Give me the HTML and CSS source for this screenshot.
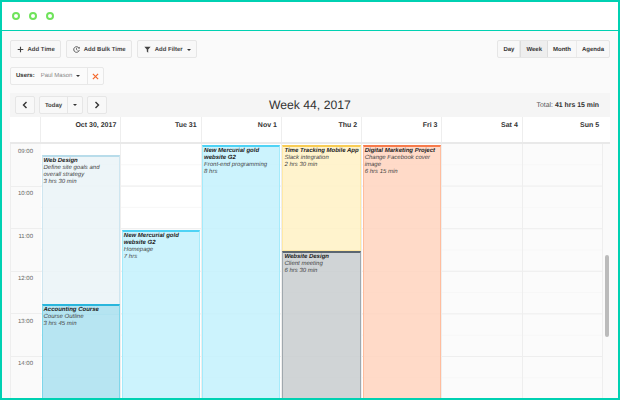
FILE: index.html
```html
<!DOCTYPE html>
<html>
<head>
    <link rel="stylesheet" href="styles.css">
</head>
<body>
    <div class="window">
        <div class="titlebar">
            <span class="dot"></span>
            <span class="dot"></span>
            <span class="dot"></span>
        </div>
        <div class="content">
            <div class="actions">
                <button class="btn">
                    <svg class="icon" viewBox="0 0 10 10"><path d="M5 1v8M1 5h8" stroke="#444" stroke-width="1.6" fill="none"/></svg>
                    Add Time
                </button>
                <button class="btn">
                    <svg class="icon" viewBox="0 0 10 10"><path d="M8.6 3.2A4 4 0 1 0 9 5.6" stroke="#444" stroke-width="1.2" fill="none"/><path d="M7.2 3.4h2.4V1z" fill="#444"/><path d="M5 2.8v2.4l1.6 1" stroke="#444" stroke-width="1" fill="none"/></svg>
                    Add Bulk Time
                </button>
                <button class="btn">
                    <svg class="icon" viewBox="0 0 10 10"><path d="M.5 1h9L6 5v4.500L4 8V5z" fill="#444"/></svg>
                    Add Filter
                    <span class="caret"></span>
                </button>
                <div class="views">
                    <button class="view">Day</button>
                    <button class="view active">Week</button>
                    <button class="view">Month</button>
                    <button class="view">Agenda</button>
                </div>
            </div>

            <div class="filter">
                <div class="filter-users">
                    <b>Users:</b>
                    <span class="filter-value">Paul Mason</span>
                    <span class="caret"></span>
                </div>
                <div class="filter-clear">
                    <svg viewBox="0 0 8 8"><path d="M1 1l6 6M7 1L1 7" stroke="#f4682c" stroke-width="1.400" fill="none"/></svg>
                </div>
            </div>

            <div class="calendar">
                <div class="cal-toolbar">
                    <div class="cal-nav">
                        <button class="btn nav-btn"><svg viewBox="0 0 6 8"><path d="M4.500 1L1.500 4l3 3" stroke="#333" stroke-width="1.400" fill="none"/></svg></button>
                        <div class="today-group">
                            <button class="today">Today</button>
                            <button class="today-more"><span class="caret"></span></button>
                        </div>
                        <button class="btn nav-btn"><svg viewBox="0 0 6 8"><path d="M1.500 1l3 3-3 3" stroke="#333" stroke-width="1.400" fill="none"/></svg></button>
                    </div>
                    <div class="cal-title">Week 44, 2017</div>
                    <div class="cal-total">Total: <b>41 hrs 15 min</b></div>
                </div>

                <div class="cal-head">
                    <div class="head-gutter"></div>
                    <div class="head-day">Oct 30, 2017</div>
                    <div class="head-day">Tue 31</div>
                    <div class="head-day">Nov 1</div>
                    <div class="head-day">Thu 2</div>
                    <div class="head-day">Fri 3</div>
                    <div class="head-day">Sat 4</div>
                    <div class="head-day">Sun 5</div>
                </div>

                <div class="cal-body">
                    <div class="times">
                        <div class="time">09:00</div>
                        <div class="time">10:00</div>
                        <div class="time">11:00</div>
                        <div class="time">12:00</div>
                        <div class="time">13:00</div>
                        <div class="time">14:00</div>
                    </div>
                    <div class="day">
                        <div class="event ev-plain ev-webdesign">
                            <b>Web Design</b>
                            <span>Define site goals and overall strategy</span>
                            <span>3 hrs 30 min</span>
                        </div>
                        <div class="event ev-teal ev-accounting">
                            <b>Accounting Course</b>
                            <span>Course Outline</span>
                            <span>3 hrs 45 min</span>
                        </div>
                    </div>
                    <div class="day">
                        <div class="event ev-blue ev-homepage">
                            <b>New Mercurial gold website G2</b>
                            <span>Homepage</span>
                            <span>7 hrs</span>
                        </div>
                    </div>
                    <div class="day">
                        <div class="event ev-blue ev-frontend">
                            <b>New Mercurial gold website G2</b>
                            <span>Front-end programming</span>
                            <span>8 hrs</span>
                        </div>
                    </div>
                    <div class="day">
                        <div class="event ev-yellow ev-tracking">
                            <b>Time Tracking Mobile App</b>
                            <span>Slack integration</span>
                            <span>2 hrs 30 min</span>
                        </div>
                        <div class="event ev-grey ev-website">
                            <b>Website Design</b>
                            <span>Client meeting</span>
                            <span>6 hrs 30 min</span>
                        </div>
                    </div>
                    <div class="day">
                        <div class="event ev-orange ev-marketing">
                            <b>Digital Marketing Project</b>
                            <span>Change Facebook cover image</span>
                            <span>6 hrs 15 min</span>
                        </div>
                    </div>
                    <div class="day weekend"></div>
                    <div class="day weekend"></div>
                    <div class="scroll-track"><div class="scroll-thumb"></div></div>
                </div>
            </div>
        </div>
    </div>
</body>
</html>
```

FILE: styles.css
```css
* {
    box-sizing: border-box;
}

body {
    margin: 0;
    font-family: "Liberation Sans", Arial, sans-serif;
    color: #333;
    text-rendering: geometricPrecision;
}

button {
    font-family: inherit;
    text-rendering: geometricPrecision;
}

.window {
    width: 620px;
    height: 400px;
    border: 2px solid #00d1b2;
    overflow: hidden;
    background: #fafafa;
}

.titlebar {
    display: flex;
    align-items: center;
    gap: 9px;
    height: 29px;
    padding-left: 10px;
    background: #fff;
    border-bottom: 1px solid #00d1b2;
}

.dot {
    width: 8px;
    height: 8px;
    border: 2.500px solid #6fe35b;
    border-radius: 50%;
}

.content {
    padding: 9px 8px 0 8px;
}

.actions {
    display: flex;
    gap: 5px;
    height: 18px;
}

.btn {
    display: flex;
    align-items: center;
    gap: 4px;
    height: 18px;
    padding: 1px 5.500px 0;
    background: #f8f8f8;
    border: 1px solid #e6e6e6;
    border-radius: 2px;
    font-size: 6px;
    font-weight: bold;
    color: #444;
    white-space: nowrap;
}

.icon {
    width: 7px;
    height: 7px;
}

.caret {
    display: inline-block;
    flex: none;
    width: 0;
    height: 0;
    border-left: 2px solid transparent;
    border-right: 2px solid transparent;
    border-top: 2px solid #333;
}

.views {
    display: flex;
    margin-left: auto;
    height: 18px;
    border: 1px solid #e6e6e6;
    border-radius: 2px;
    background: #f8f8f8;
}

.view {
    padding: 1px 5px 0;
    border: 0;
    border-right: 1px solid #eaeaea;
    background: none;
    font-size: 6px;
    font-weight: bold;
    color: #333;
}

.view:last-child {
    border-right: 0;
}

.view.active {
    background: #eee;
    border-left: 1px solid #ddd;
    border-right: 1px solid #ddd;
}

.filter {
    display: inline-flex;
    height: 18px;
    margin-top: 9px;
    border: 1px solid #e8e8e8;
    border-radius: 2px;
    background: #fbfbfb;
    font-size: 6px;
}

.filter-users {
    display: flex;
    align-items: center;
    width: 76px;
    padding-left: 5px;
    color: #333;
    white-space: nowrap;
}

.filter-value {
    margin: 0 4px 0 6px;
    color: #888;
}

.filter-clear {
    display: flex;
    align-items: center;
    justify-content: center;
    width: 16px;
    border-left: 1px solid #e8e8e8;
}

.filter-clear svg {
    width: 7px;
    height: 7px;
}

.calendar {
    margin-top: 8px;
}

.cal-toolbar {
    position: relative;
    display: flex;
    align-items: center;
    justify-content: space-between;
    height: 24px;
    padding: 0 11px 0 5px;
    background: #f5f5f5;
}

.cal-nav {
    display: flex;
    gap: 4px;
}

.nav-btn {
    justify-content: center;
    width: 20px;
    padding: 0;
}

.nav-btn svg {
    width: 6px;
    height: 8px;
}

.today-group {
    display: flex;
    height: 18px;
    border: 1px solid #e6e6e6;
    border-radius: 2px;
    background: #f8f8f8;
}

.today {
    width: 28px;
    padding: 1px 0 0;
    border: 0;
    border-right: 1px solid #e6e6e6;
    background: none;
    font-size: 6px;
    font-weight: bold;
    color: #444;
}

.today-more {
    display: flex;
    align-items: center;
    justify-content: center;
    width: 14px;
    padding: 0;
    border: 0;
    background: none;
}

.cal-title {
    position: absolute;
    left: 259px;
    font-size: 12.200px;
    color: #333;
}

.cal-total {
    font-size: 6.900px;
    color: #555;
}

.cal-total b {
    color: #333;
}

.cal-head {
    display: grid;
    grid-template-columns: 31px repeat(7, 80.300px);
    height: 27px;
    background: #fff;
    border-bottom: 2px solid #e9e9e9;
}

.head-gutter {
    border-right: 1px solid #eee;
}

.head-day {
    padding: 5px 4px 0 0;
    border-right: 1px solid #eee;
    text-align: right;
    font-size: 7px;
    font-weight: bold;
    color: #333;
}

.head-day:last-child {
    border-right: 0;
}

.cal-body {
    display: grid;
    grid-template-columns: 31px repeat(7, 80.300px) 1fr;
    height: 255px;
    overflow: hidden;
    background: #fff;
}

.times {
    background: #fafafa;
    border-left: 1px solid #eee;
}

.time {
    height: 42.600px;
    padding: 4.500px 8px 0 0;
    border-bottom: 1px solid #eee;
    text-align: right;
    font-size: 6px;
    color: #666;
}

.day {
    position: relative;
    border-right: 1px solid #eee;
    background-image:
        linear-gradient(#eee 1px, transparent 1px),
        linear-gradient(#f7f7f7 1px, transparent 1px);
    background-size: 100% 42.600px, 100% 21.300px;
    background-position: 0 41.600px, 0 20.300px;
}

.weekend {
    background-color: #fbfbfb;
}

.scroll-track {
    position: relative;
    background: #fafafa;
}

.scroll-thumb {
    position: absolute;
    top: 111px;
    left: 2px;
    width: 4px;
    height: 82px;
    border-radius: 2px;
    background: #bbb;
}

.event {
    position: absolute;
    left: 0.500px;
    right: 0.500px;
    padding: 1px;
    border: 1px solid;
    border-top-width: 2px;
    font-size: 6px;
    line-height: 7.100px;
    font-style: italic;
    color: #444;
}

.event b,
.event span {
    display: block;
}

.event b {
    color: #222;
}

.ev-plain {
    background: rgba(234, 243, 247, 0.85);
    border-color: #cfe6f0;
    border-top-color: #b8dcea;
}

.ev-teal {
    background: rgba(170, 225, 240, 0.85);
    border-color: #7fd6ea;
    border-top-color: #29b6dc;
}

.ev-blue {
    background: rgba(195, 241, 253, 0.85);
    border-color: #a5ebfb;
    border-top-color: #4fd3f5;
}

.ev-yellow {
    background: rgba(255, 241, 196, 0.85);
    border-color: #ffe9a6;
    border-top-color: #f8cc55;
}

.ev-grey {
    background: rgba(200, 205, 207, 0.85);
    border-color: #a0a8ae;
    border-top-color: #5b6670;
}

.ev-orange {
    background: rgba(255, 211, 190, 0.85);
    border-color: #ffbd9e;
    border-top-color: #f77b4c;
}

.ev-webdesign {
    top: 11px;
    height: 160px;
}

.ev-accounting {
    top: 160px;
    height: 120px;
}

.ev-homepage {
    top: 86px;
    height: 200px;
}

.ev-frontend {
    top: 1px;
    height: 280px;
}

.ev-tracking {
    top: 1px;
    height: 106px;
}

.ev-website {
    top: 107px;
    height: 180px;
}

.ev-marketing {
    top: 1px;
    height: 280px;
}
```
